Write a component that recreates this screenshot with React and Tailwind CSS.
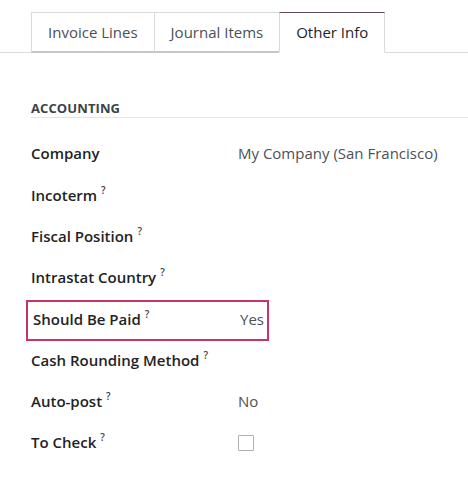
const fields = [
  { label: 'Company', help: false, value: 'My Company (San Francisco)' },
  { label: 'Incoterm', help: true },
  { label: 'Fiscal Position', help: true },
  { label: 'Intrastat Country', help: true },
  { label: 'Should Be Paid', help: true, value: 'Yes', highlight: true },
  { label: 'Cash Rounding Method', help: true },
  { label: 'Auto-post', help: true, value: 'No' },
  { label: 'To Check', help: true, checkbox: true },
];

const tabs = ['Invoice Lines', 'Journal Items', 'Other Info'];

export default function App() {
  return (
    <div
      className="w-[468px] h-[484px] bg-white overflow-hidden text-[#212529]"
      style={{ fontFamily: '"Open Sans", "Noto Sans", sans-serif' }}
    >
      {/* Tabs */}
      <div className="flex pt-3 pl-[31px] border-b border-[#d8dadd]">
        {tabs.map((tab, i) => {
          const active = i === tabs.length - 1;
          return (
            <div
              key={tab}
              className={
                active
                  ? 'h-[41px] -mb-px px-[16px] flex items-center text-[15px] text-[#212529] bg-white border border-[#d8dadd] border-t-[#5f4a5a] border-b-white'
                  : 'h-[41px] -mb-px px-[16px] flex items-center text-[15px] text-[#4a4f55] border border-r-0 border-[#d8dadd] border-b-[#c4c7ca] border-b-2'
              }
            >
              {tab}
            </div>
          );
        })}
      </div>

      {/* Accounting group */}
      <div className="pl-[31px] pt-[46px]">
        <div className="text-[13px] leading-[18px] font-bold text-[#3e4246] tracking-[0.1px] border-b border-[#e2e4e6]">
          ACCOUNTING
        </div>

        <div className="pt-[15px]">
          {fields.map((f) => (
            <div
              key={f.label}
              className={
                f.highlight
                  ? 'flex items-center h-[41.3px] -ml-[5px] w-[243px] pl-[5px] pb-[3px] border-2 border-[#c9336a] mt-[2px] -mb-[2px]'
                  : 'flex items-center h-[41.3px]'
              }
            >
              <div className="w-[207px] shrink-0 text-[15px] font-semibold text-[#1f2326] flex items-start">
                <span>{f.label}</span>
                {f.help && (
                  <span className="ml-[4px] text-[10px] leading-none font-semibold text-[#3d4247] relative top-[1px]">?</span>
                )}
              </div>
              {f.value && <div className="text-[15px] text-[#4c5157]">{f.value}</div>}
              {f.checkbox && (
                <div className="w-4 h-4 border border-[#adb1b5] bg-white rounded-[1px]" />
              )}
            </div>
          ))}
        </div>
      </div>
    </div>
  );
}
